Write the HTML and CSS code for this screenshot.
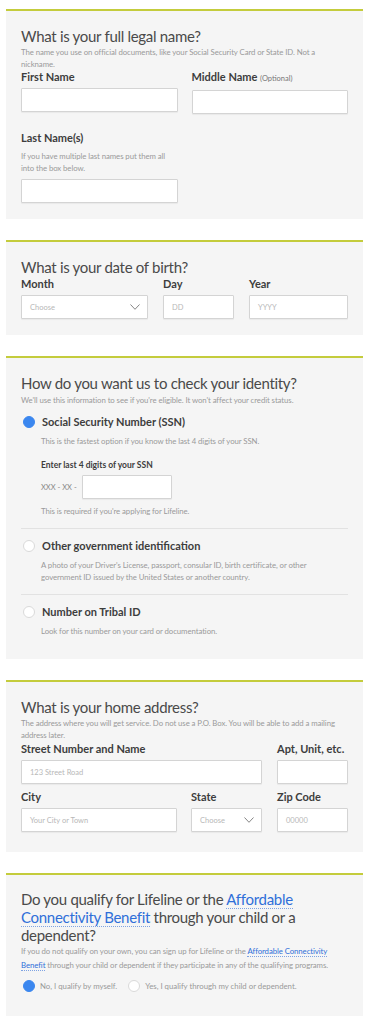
FILE: index.html
```html
<!DOCTYPE html>
<html lang="en">
<head>
<meta charset="utf-8">
<title>Application</title>
<link rel="stylesheet" href="styles.css">
</head>
<body>
<main class="page">

  <section class="card">
    <h2 class="card-title">What is your full legal name?</h2>
    <p class="card-desc">The name you use on official documents, like your Social Security Card or State ID. Not a nickname.</p>
    <div class="row two">
      <div class="field">
        <label class="label">First Name</label>
        <div class="input"></div>
      </div>
      <div class="field">
        <label class="label">Middle Name <span class="opt">(Optional)</span></label>
        <div class="input"></div>
      </div>
    </div>
    <div class="row two last">
      <div class="field">
        <label class="label">Last Name(s)</label>
        <p class="field-desc narrow">If you have multiple last names put them all into the box below.</p>
        <div class="input"></div>
      </div>
    </div>
  </section>

  <section class="card">
    <h2 class="card-title">What is your date of birth?</h2>
    <div class="row dob">
      <div class="field">
        <label class="label">Month</label>
        <div class="input select"><span class="ph">Choose</span><svg class="chev" viewBox="0 0 10 6" width="10" height="6"><path d="M0.5 0.5 L5 5.3 L9.5 0.5" fill="none" stroke="#777" stroke-width="0.9"/></svg></div>
      </div>
      <div class="field">
        <label class="label">Day</label>
        <div class="input"><span class="ph">DD</span></div>
      </div>
      <div class="field">
        <label class="label">Year</label>
        <div class="input"><span class="ph">YYYY</span></div>
      </div>
    </div>
  </section>

  <section class="card">
    <h2 class="card-title spaced">How do you want us to check your identity?</h2>
    <p class="card-desc">We'll use this information to see if you're eligible. It won't affect your credit status.</p>
    <div class="option">
      <div class="opt-head"><span class="radio checked"></span><span class="opt-title">Social Security Number (SSN)</span></div>
      <div class="opt-body">
        <p class="field-desc">This is the fastest option if you know the last 4 digits of your SSN.</p>
        <div class="ssn-label">Enter last 4 digits of your SSN</div>
        <div class="ssn-row"><span class="ssn-prefix">XXX - XX -</span><div class="input ssn"></div></div>
        <p class="field-desc">This is required if you're applying for Lifeline.</p>
      </div>
    </div>
    <div class="option">
      <div class="opt-head"><span class="radio"></span><span class="opt-title">Other government identification</span></div>
      <div class="opt-body">
        <p class="field-desc">A photo of your Driver's License, passport, consular ID, birth certificate, or other government ID issued by the United States or another country.</p>
      </div>
    </div>
    <div class="option">
      <div class="opt-head"><span class="radio"></span><span class="opt-title">Number on Tribal ID</span></div>
      <div class="opt-body">
        <p class="field-desc">Look for this number on your card or documentation.</p>
      </div>
    </div>
  </section>

  <section class="card address">
    <h2 class="card-title">What is your home address?</h2>
    <p class="card-desc">The address where you will get service. Do not use a P.O. Box. You will be able to add a mailing address later.</p>
    <div class="row addr1">
      <div class="field">
        <label class="label">Street Number and Name</label>
        <div class="input"><span class="ph">123 Street Road</span></div>
      </div>
      <div class="field">
        <label class="label">Apt, Unit, etc.</label>
        <div class="input"></div>
      </div>
    </div>
    <div class="row addr2">
      <div class="field">
        <label class="label">City</label>
        <div class="input"><span class="ph">Your City or Town</span></div>
      </div>
      <div class="field">
        <label class="label">State</label>
        <div class="input select"><span class="ph">Choose</span><svg class="chev" viewBox="0 0 10 6" width="10" height="6"><path d="M0.5 0.5 L5 5.3 L9.5 0.5" fill="none" stroke="#777" stroke-width="0.9"/></svg></div>
      </div>
      <div class="field">
        <label class="label">Zip Code</label>
        <div class="input"><span class="ph">00000</span></div>
      </div>
    </div>
  </section>

  <section class="card final">
    <h2 class="card-title multi">Do you qualify for Lifeline or the <a class="link" href="#">Affordable Connectivity Benefit</a> through your child or a dependent?</h2>
    <p class="card-desc tall">If you do not qualify on your own, you can sign up for Lifeline or the <a class="link" href="#">Affordable Connectivity Benefit</a> through your child or dependent if they participate in any of the qualifying programs.</p>
    <div class="inline-radios">
      <span class="radio checked"></span><span class="inline-label">No, I qualify by myself.</span>
      <span class="radio"></span><span class="inline-label">Yes, I qualify through my child or dependent.</span>
    </div>
  </section>

</main>
</body>
</html>
```

FILE: styles.css
```css
* { box-sizing: border-box; }
html, body { margin: 0; padding: 0; background: #fff; }
body {
  font-family: "Lato", "Noto Sans", "Liberation Sans", sans-serif;
  color: #444;
}
.page { padding: 9px 6px 4px; display: flex; flex-direction: column; gap: 21px; }

.card {
  background: #f5f5f5;
  border-top: 2px solid #c4cc3c;
  padding: 15px 15px 16px;
}
.card.address { padding-bottom: 20px; }
.card.final { padding-bottom: 24px; }
.card-title {
  margin: 0;
  font-weight: 400;
  font-size: 15px;
  letter-spacing: -0.3px;
  line-height: 20px;
  color: #4a4a4a;
}
.card-title.spaced { margin-bottom: 1px; }
.card-title.multi { line-height: 18px; }
.card-desc, .field-desc {
  margin: 0;
  font-size: 7.8px;
  letter-spacing: -0.08px;
  line-height: 12px;
  color: #9a9a9a;
}
.field-desc.narrow { max-width: 150px; }
.card-desc.tall { line-height: 14px; }
.row { display: grid; column-gap: 14px; }
.row.two { grid-template-columns: 1fr 1fr; }
.row.last { margin-top: 17px; }
.row.last .field-desc { margin: 5px 0 5px; }
.row.dob { grid-template-columns: 127px 71px 1fr; column-gap: 15px; }
.row.addr1 { grid-template-columns: 1fr 71px; column-gap: 15px; margin-top: 1px; }
.row.addr2 { grid-template-columns: 156px 71px 1fr; column-gap: 14px; margin-top: 6px; }
.row.addr2 .field:nth-child(3) { margin-left: 1px; }
.label {
  display: block;
  font-weight: 700;
  font-size: 11px;
  line-height: 14px;
  color: #3d3d3d;
}
.opt { font-weight: 400; font-size: 7.5px; color: #777; }
.input {
  margin-top: 4px;
  height: 24px;
  background: #fff;
  border: 1px solid #d4d4d4;
  border-radius: 1px;
  box-shadow: 0 1px 1px rgba(0,0,0,0.05);
  display: flex;
  align-items: center;
  padding: 0 7px 0 8px;
}
.ph { font-size: 7.5px; color: #b8b8b8; }
.select { justify-content: space-between; }
.chev { display: block; }

.option { border-bottom: 1px solid #e2e2e2; padding: 10px 0 11px; }
.option:last-child { border-bottom: 0; padding-bottom: 6px; }
.card-desc + .option { padding-top: 9px; }
.opt-head { display: flex; align-items: center; gap: 7px; padding-left: 2px; }
.opt-title { font-weight: 700; font-size: 11px; line-height: 14px; color: #3d3d3d; }
.radio {
  width: 12px; height: 12px; border-radius: 50%;
  background: #fff; border: 1px solid #dadada;
  flex: none; display: inline-block;
}
.radio.checked { background: #3b87ef; border-color: #3b87ef; }
.opt-body { padding-left: 20px; padding-top: 6px; }
.ssn-label { font-weight: 700; font-size: 8.5px; line-height: 12px; color: #3d3d3d; margin-top: 12px; }
.ssn-row { display: flex; align-items: center; gap: 5px; margin: 4px 0 6px; }
.ssn-prefix { font-size: 7.5px; color: #888; }
.input.ssn { width: 90px; margin-top: 0; }

.link { color: #2f6fd9; text-decoration: none; border-bottom: 1px dotted #7ea3e3; }
.inline-radios { display: flex; align-items: center; margin-top: 8px; padding-left: 2px; font-size: 7.8px; color: #999; }
.inline-radios .radio { margin-right: 5px; }
.inline-label { margin-right: 11px; }
```
